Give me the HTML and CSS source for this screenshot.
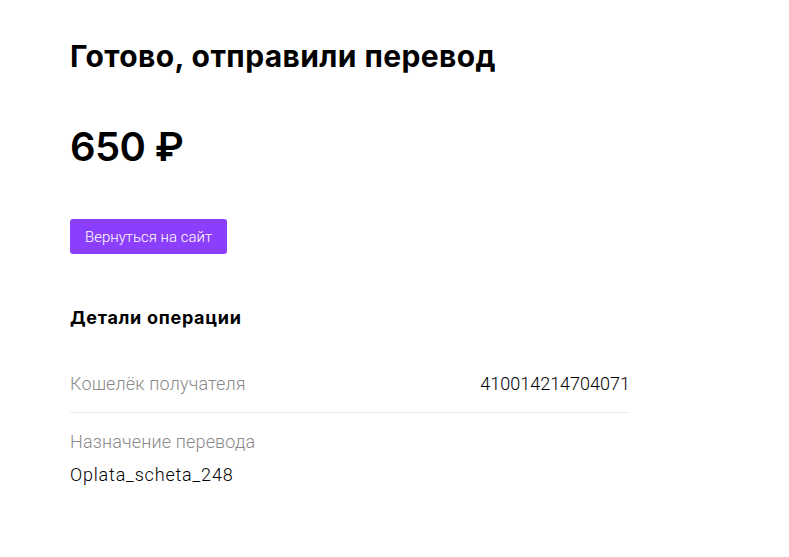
FILE: index.html
```
<!DOCTYPE html>
<html lang="ru">
<head>
<meta charset="utf-8">
<link rel="stylesheet" href="styles.css">
</head>
<body>
<main class="page">
  <h1 class="title">Готово, отправили перевод</h1>
  <div class="amount">650 ₽</div>
  <a class="btn" href="#">Вернуться на сайт</a>
  <h2 class="subtitle">Детали операции</h2>
  <div class="details">
    <div class="row row-line">
      <span class="label">Кошелёк получателя</span>
      <span class="value">410014214704071</span>
    </div>
    <div class="row-col">
      <span class="label">Назначение перевода</span>
      <span class="value value-wide">Oplata_scheta_248</span>
    </div>
  </div>
</main>
</body>
</html>
```
FILE: styles.css
```
* { box-sizing: border-box; }
html, body { margin: 0; padding: 0; background: #fff; }
body { font-family: Roboto, "Noto Sans", sans-serif; color: #000; }
.page {
  width: 560px;
  margin-left: 70px;
  padding-top: 36px;
  display: flex;
  flex-direction: column;
  align-items: flex-start;
}
.title {
  margin: 0;
  font-family: Inter, "Noto Sans", sans-serif;
  font-weight: 700;
  font-size: 30px;
  line-height: 40px;
  letter-spacing: 0.4px;
}
.amount {
  margin-top: 46px;
  font-family: Inter, "Noto Sans", sans-serif;
  font-weight: 600;
  font-size: 40px;
  line-height: 50px;
  letter-spacing: -0.6px;
}
.btn {
  margin-top: 47px;
  display: inline-flex;
  align-items: center;
  height: 35px;
  padding: 0 15px;
  background: #8b3ffd;
  color: #fff;
  border-radius: 3px;
  text-decoration: none;
  font-weight: 300;
  font-size: 15px;
}
.subtitle {
  margin: 52px 0 0;
  font-family: Inter, "Noto Sans", sans-serif;
  font-weight: 700;
  font-size: 18px;
  line-height: 24px;
  letter-spacing: 0.7px;
}
.details { width: 100%; margin-top: 25px; }
.row {
  display: flex;
  justify-content: space-between;
  align-items: center;
  height: 58px;
}
.row-line { border-bottom: 1px solid #ececec; }
.row-col {
  display: flex;
  flex-direction: column;
  gap: 12px;
  padding-top: 18px;
}
.label { color: #8a8a8a; font-weight: 300; font-size: 18px; line-height: 21px; letter-spacing: 0.15px; }
.value { color: #000; font-weight: 300; font-size: 18px; line-height: 21px; }
.value-wide { letter-spacing: 0.8px; }
```
